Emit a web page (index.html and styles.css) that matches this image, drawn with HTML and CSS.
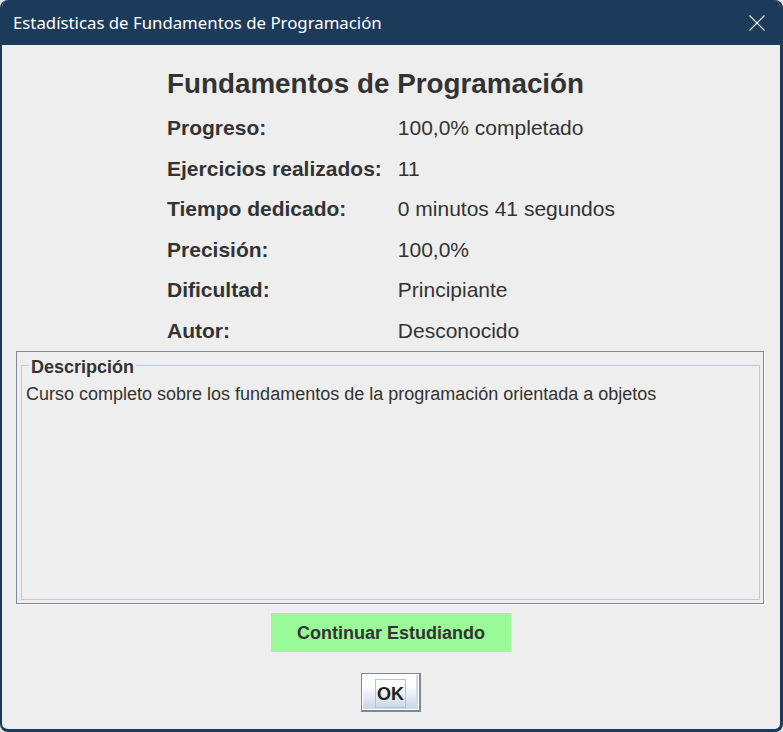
FILE: index.html
```html
<!DOCTYPE html>
<html lang="es">
<head>
<meta charset="utf-8">
<title>Estadísticas de Fundamentos de Programación</title>
<link rel="stylesheet" href="styles.css">
</head>
<body>
<div class="window">
  <div class="titlebar">
    <span class="title">Estadísticas de Fundamentos de Programación</span>
    <svg class="close" width="16" height="16" viewBox="0 0 16 16"><path d="M0.5 0.5 L15.5 15.5 M15.5 0.5 L0.5 15.5" stroke="#ffffff" stroke-width="1.1" fill="none"/></svg>
  </div>
  <div class="content">
    <div class="info">
      <h1 class="heading">Fundamentos de Programación</h1>
      <div class="label">Progreso:</div><div class="value">100,0% completado</div>
      <div class="label">Ejercicios realizados:</div><div class="value">11</div>
      <div class="label">Tiempo dedicado:</div><div class="value">0 minutos 41 segundos</div>
      <div class="label">Precisión:</div><div class="value">100,0%</div>
      <div class="label">Dificultad:</div><div class="value">Principiante</div>
      <div class="label">Autor:</div><div class="value">Desconocido</div>
    </div>
    <div class="scrollbox">
      <fieldset class="desc">
        <legend>Descripción</legend>
        <p>Curso completo sobre los fundamentos de la programación orientada a objetos</p>
      </fieldset>
    </div>
    <button class="continue">Continuar Estudiando</button>
    <button class="ok"><span class="focus">OK</span></button>
  </div>
</div>
</body>
</html>
```

FILE: styles.css
```css
html, body {
  margin: 0;
  padding: 0;
  background: #e4e4e4;
}
.window {
  width: 783px;
  height: 732px;
  box-sizing: border-box;
  border-radius: 8px;
  overflow: hidden;
  border-left: 2px solid #1c3a5a;
  border-right: 3px solid #1c3a5a;
  border-bottom: 3px solid #1c3a5a;
  background: #eeeeee;
  display: flex;
  flex-direction: column;
}
.titlebar {
  height: 45px;
  flex: none;
  background: #1c3a5a;
  margin-left: -2px;
  margin-right: -3px;
  display: flex;
  align-items: center;
  justify-content: space-between;
  padding: 0 18px 0 13px;
}
.title {
  font-family: "Noto Sans", "Open Sans", sans-serif;
  font-size: 16.8px;
  color: #ffffff;
  padding-bottom: 1px;
}
.close {
  display: block;
}
.content {
  flex: 1;
  display: flex;
  flex-direction: column;
  align-items: center;
  font-family: "Liberation Sans", Arial, sans-serif;
  color: #333333;
}
.info {
  display: grid;
  grid-template-columns: auto auto;
  column-gap: 16px;
  justify-content: center;
  padding-top: 20.5px;
  align-self: stretch;
}
.heading {
  grid-column: 1 / -1;
  margin: 0 0 6.5px 0;
  font-size: 27.8px;
  line-height: 36px;
  font-weight: bold;
}
.label, .value {
  font-size: 21px;
  line-height: 40.5px;
  white-space: nowrap;
}
.label {
  font-weight: bold;
}
.scrollbox {
  align-self: stretch;
  margin: 0 16px 0 14px;
  height: 253px;
  box-sizing: border-box;
  border: 1px solid #7d8b99;
  box-shadow: 1px 1px 0 #ffffff;
  padding: 1.5px 3px 3px 4px;
  display: flex;
}
.desc {
  flex: 1;
  margin: 0;
  min-width: 0;
  border: 1px solid #b8cde3;
  padding: 0 4px;
}
.desc legend {
  margin-left: 3px;
  padding: 3px 2px 0 2px;
  font-size: 18px;
  line-height: 20px;
  font-weight: bold;
}
.desc p {
  margin: 7px 0 0 0;
  font-size: 18px;
  line-height: 20px;
}
.continue {
  margin-top: 9px;
  width: 240px;
  height: 39px;
  border: none;
  background: #98fb98;
  font-family: "Liberation Sans", Arial, sans-serif;
  font-size: 18px;
  font-weight: bold;
  color: #333333;
  padding: 2px 0 0 0;
}
.ok {
  margin-top: 21px;
  width: 60px;
  height: 39px;
  box-sizing: border-box;
  border: 1px solid #7b8a99;
  border-right-width: 2px;
  border-bottom-width: 2px;
  background: linear-gradient(#fbfcfd 0%, #ffffff 30%, #e2eaf3 65%, #c3d3e4 100%);
  box-shadow: inset 0 0 0 1px #ffffff, inset -1px -1px 0 2px #d0dbe6;
  font-family: "Liberation Sans", Arial, sans-serif;
  font-size: 18px;
  font-weight: bold;
  color: #222222;
  padding: 2px 0 0 0;
  display: flex;
  align-items: center;
  justify-content: center;
}
.focus {
  border: 1px solid #b0c4d8;
  padding: 5px 1px 4px 1px;
  line-height: 18px;
}
```
